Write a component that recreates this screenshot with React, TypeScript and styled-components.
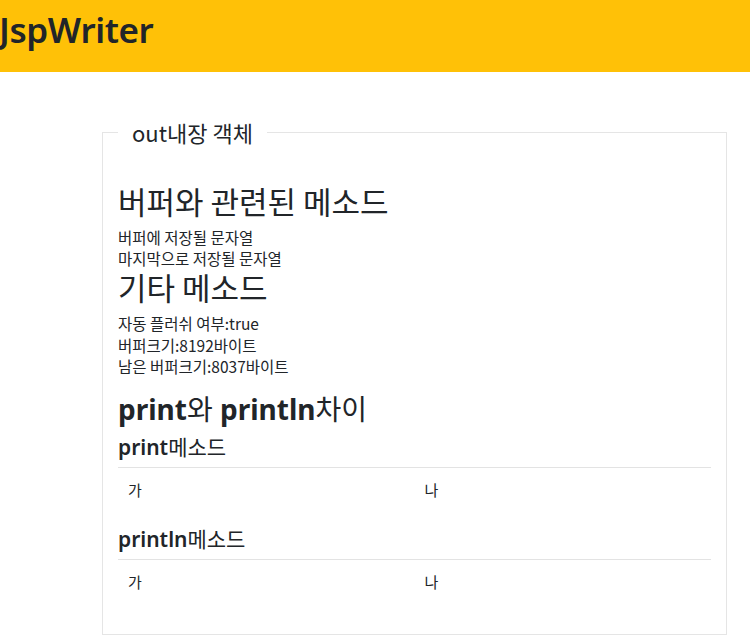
import styled, { createGlobalStyle } from 'styled-components';

const GlobalStyle = createGlobalStyle`
    body {
        margin: 0;
        background: #fff;
        color: #212529;
        font-family: 'Noto Sans', 'Noto Sans CJK KR', sans-serif;
    }
`;

const Header = styled.header`
    height: 72px;
    background-color: #ffc107;
    display: flex;
    align-items: center;
`;

const Title = styled.h1`
    margin: 0 0 13px -1px;
    font-size: 35px;
    font-weight: 600;
    line-height: 44px;
    letter-spacing: -0.4px;
    color: #212529;
`;

const Main = styled.main`
    padding: 48px 23px 0 102px;
`;

const Box = styled.fieldset`
    margin: 0;
    padding: 0 15px 32px 15px;
    border: 1px solid #e5e5e5;
    min-width: 0;
`;

const Legend = styled.legend`
    margin-left: 0;
    padding: 0 14px;
    font-size: 22px;
    line-height: 24px;
    font-family: 'Noto Sans CJK KR', sans-serif;
`;

const Heading = styled.h3<{ $top: number }>`
    margin: ${({ $top }) => $top}px 0 0;
    font-size: 31px;
    font-weight: 400;
    line-height: 34px;
    font-family: 'Noto Sans CJK KR', sans-serif;
`;

const Line = styled.p<{ $lh?: number }>`
    margin: 0;
    font-size: 15.5px;
    line-height: ${({ $lh }) => $lh ?? 21}px;
    font-family: 'Noto Sans CJK KR', sans-serif;
`;

const Group = styled.div<{ $top: number }>`
    margin-top: ${({ $top }) => $top}px;
`;

const SubTitle = styled.h2`
    margin: 11px 0 0;
    font-size: 28px;
    font-weight: 700;
    line-height: 38px;
`;

const MethodTitle = styled.h4<{ $top: number }>`
    margin: ${({ $top }) => $top}px 0 0;
    font-size: 21px;
    font-weight: 600;
    line-height: 28px;
`;

const Ko = styled.span`
    font-family: 'Noto Sans CJK KR', sans-serif;
    font-weight: 400;
`;

const Rule = styled.hr`
    margin: 6px 0 0;
    border: 0;
    border-top: 1px solid #e3e3e3;
`;

const Row = styled.div`
    display: grid;
    grid-template-columns: 1fr 1fr;
`;

const Cell = styled.div`
    padding: 11px 10px 10px;
    font-size: 15px;
    line-height: 21px;
    font-family: 'Noto Sans CJK KR', sans-serif;
`;

export default function App() {
    return (
        <>
            <GlobalStyle />
            <Header>
                <Title>JspWriter</Title>
            </Header>
            <Main>
                <Box>
                    <Legend>out내장 객체</Legend>
                    <Heading $top={40}>버퍼와 관련된 메소드</Heading>
                    <Group $top={9}>
                        <Line>버퍼에 저장될 문자열</Line>
                        <Line>마지막으로 저장될 문자열</Line>
                    </Group>
                    <Heading $top={1}>기타 메소드</Heading>
                    <Group $top={9}>
                        <Line $lh={21.5}>자동 플러쉬 여부:true</Line>
                        <Line $lh={21.5}>버퍼크기:8192바이트</Line>
                        <Line $lh={21.5}>남은 버퍼크기:8037바이트</Line>
                    </Group>
                    <SubTitle>
                        print<Ko>와</Ko> println<Ko>차이</Ko>
                    </SubTitle>
                    <MethodTitle $top={4}>
                        print<Ko>메소드</Ko>
                    </MethodTitle>
                    <Rule />
                    <Row>
                        <Cell>가</Cell>
                        <Cell>나</Cell>
                    </Row>
                    <MethodTitle $top={14}>
                        println<Ko>메소드</Ko>
                    </MethodTitle>
                    <Rule />
                    <Row>
                        <Cell>가</Cell>
                        <Cell>나</Cell>
                    </Row>
                </Box>
            </Main>
        </>
    );
}
